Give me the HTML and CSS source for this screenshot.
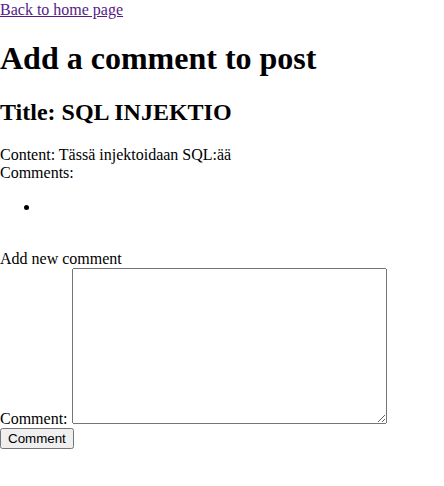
FILE: index.html
```html
<!DOCTYPE html>
<html>
<head>
<meta charset="utf-8">
<title>Add a comment</title>
<link rel="stylesheet" href="styles.css">
</head>
<body>
<a href="#" class="back">Back to home page</a>
<h1>Add a comment to post</h1>
<h2>Title: SQL INJEKTIO</h2>
<div>Content: Tässä injektoidaan SQL:ää</div>
<div>Comments:</div>
<ul><li></li></ul>
<br>
<form>
Add new comment<br>
<label for="comment">Comment:</label>
<textarea id="comment" class="comment-box"></textarea><br>
<button type="button" class="submit">Comment</button>
</form>
</body>
</html>
```
FILE: styles.css
```css
body {
  margin: 0;
  padding-top: 1px;
  font-family: "Liberation Serif", "Times New Roman", serif;
  font-size: 16px;
  color: #000;
  background: #fff;
}
.back {
  color: #551a8b;
}
.comment-box {
  box-sizing: border-box;
  width: 315px;
  height: 156px;
}
.submit {
  font-family: "Liberation Sans", Arial, sans-serif;
  font-size: 13.333px;
}
```
